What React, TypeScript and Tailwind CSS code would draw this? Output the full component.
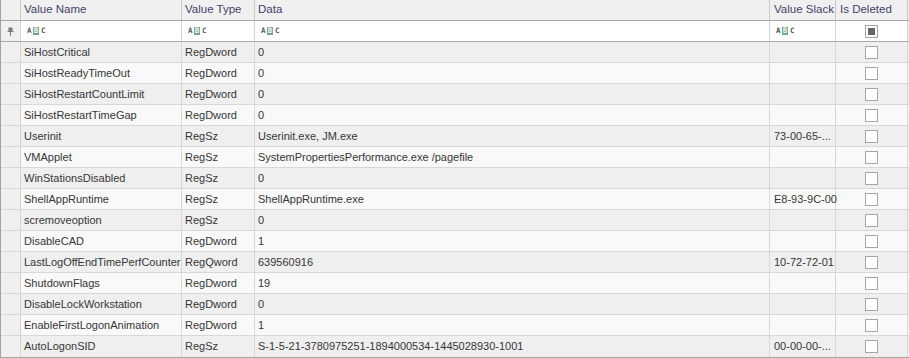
import React from "react";

type Row = { name: string; type: string; data: string; slack: string };

const rows: Row[] = [
  { name: "SiHostCritical", type: "RegDword", data: "0", slack: "" },
  { name: "SiHostReadyTimeOut", type: "RegDword", data: "0", slack: "" },
  { name: "SiHostRestartCountLimit", type: "RegDword", data: "0", slack: "" },
  { name: "SiHostRestartTimeGap", type: "RegDword", data: "0", slack: "" },
  { name: "Userinit", type: "RegSz", data: "Userinit.exe, JM.exe", slack: "73-00-65-..." },
  { name: "VMApplet", type: "RegSz", data: "SystemPropertiesPerformance.exe /pagefile", slack: "" },
  { name: "WinStationsDisabled", type: "RegSz", data: "0", slack: "" },
  { name: "ShellAppRuntime", type: "RegSz", data: "ShellAppRuntime.exe", slack: "E8-93-9C-00" },
  { name: "scremoveoption", type: "RegSz", data: "0", slack: "" },
  { name: "DisableCAD", type: "RegDword", data: "1", slack: "" },
  { name: "LastLogOffEndTimePerfCounter", type: "RegQword", data: "639560916", slack: "10-72-72-01" },
  { name: "ShutdownFlags", type: "RegDword", data: "19", slack: "" },
  { name: "DisableLockWorkstation", type: "RegDword", data: "0", slack: "" },
  { name: "EnableFirstLogonAnimation", type: "RegDword", data: "1", slack: "" },
  { name: "AutoLogonSID", type: "RegSz", data: "S-1-5-21-3780975251-1894000534-1445028930-1001", slack: "00-00-00-..." },
];

const cols = "grid grid-cols-[20px_161px_73px_515px_66px_72px_1fr]";

function AbcIcon() {
  return (
    <span className="flex items-center gap-[2px] font-['DejaVu_Sans_Mono',monospace] text-[7.5px] font-bold leading-none text-[#5a5a5a]">
      <span className="w-[4px] text-center">A</span>
      <span className="flex h-[8px] w-[6px] items-center justify-center bg-[#6fa88c] text-[7.5px] font-bold text-[#f4f4f4]">B</span>
      <span className="w-[4px] text-center">C</span>
    </span>
  );
}

function Checkbox(props: { indeterminate?: boolean }) {
  return (
    <span className="flex h-[13px] w-[13px] items-center justify-center border border-[#a6a6a6] bg-white">
      {props.indeterminate ? <span className="h-[7px] w-[7px] bg-[#666666]" /> : null}
    </span>
  );
}

function Pin() {
  return (
    <svg width="7" height="9" viewBox="0 0 7 9">
      <rect x="1.5" y="0.5" width="4" height="4" fill="#7a7a7a" />
      <rect x="0.5" y="4" width="6" height="1" fill="#7a7a7a" />
      <rect x="3" y="5" width="1" height="4" fill="#7a7a7a" />
    </svg>
  );
}

export default function App() {
  return (
    <div className="h-[358px] w-[909px] overflow-hidden bg-white font-['Liberation_Sans',Arial,sans-serif] text-[11px] text-[#363636]">
      <div className="border-b border-l border-[#a3a3a3]">
        <div className={`${cols} h-[21px] whitespace-nowrap border-b border-[#a8a8a8] bg-[#f0f0f0] text-[11.5px] text-[#43436a]`}>
          <div className="border-r border-[#c8c8c8]" />
          <div className="flex items-center border-r border-[#c8c8c8] px-[3px]">Value Name</div>
          <div className="flex items-center border-r border-[#c8c8c8] px-[3px]">Value Type</div>
          <div className="flex items-center border-r border-[#c8c8c8] px-[3px]">Data</div>
          <div className="flex items-center border-r border-[#c8c8c8] px-[4px]">Value Slack</div>
          <div className="flex items-center border-r border-[#c8c8c8] px-[4px]">Is Deleted</div>
          <div />
        </div>
        <div className={`${cols} h-[21px] border-b border-[#a8a8a8] bg-white`}>
          <div className="flex items-center justify-center border-r border-[#d4d4d4] bg-[#f0f0f0]">
            <Pin />
          </div>
          <div className="flex items-center border-r border-[#d4d4d4] pl-[6px]"><AbcIcon /></div>
          <div className="flex items-center border-r border-[#d4d4d4] pl-[6px]"><AbcIcon /></div>
          <div className="flex items-center border-r border-[#d4d4d4] pl-[6px]"><AbcIcon /></div>
          <div className="flex items-center border-r border-[#d4d4d4] pl-[6px]"><AbcIcon /></div>
          <div className="flex items-center justify-center border-r border-[#d4d4d4]"><Checkbox indeterminate /></div>
          <div className="bg-[#f0f0f0]" />
        </div>
        {rows.map((r, i) => (
          <div
            key={r.name}
            className={`${cols} h-[21px] ${i === rows.length - 1 ? "" : "border-b border-[#d8d8d8]"} ${i % 2 === 0 ? "bg-[#efefef]" : "bg-[#f9f9f9]"}`}
          >
            <div className="border-r border-[#d4d4d4] bg-[#f0f0f0]" />
            <div className="flex items-center overflow-hidden whitespace-nowrap border-r border-[#d8d8d8] px-[3px]">{r.name}</div>
            <div className="flex items-center whitespace-nowrap border-r border-[#d8d8d8] px-[3px]">{r.type}</div>
            <div className="flex items-center whitespace-nowrap border-r border-[#d8d8d8] px-[3px]">{r.data}</div>
            <div className="flex items-center whitespace-nowrap border-r border-[#d8d8d8] px-[4px]">{r.slack}</div>
            <div className="flex items-center justify-center border-r border-[#d8d8d8]"><Checkbox /></div>
            <div />
          </div>
        ))}
      </div>
    </div>
  );
}
